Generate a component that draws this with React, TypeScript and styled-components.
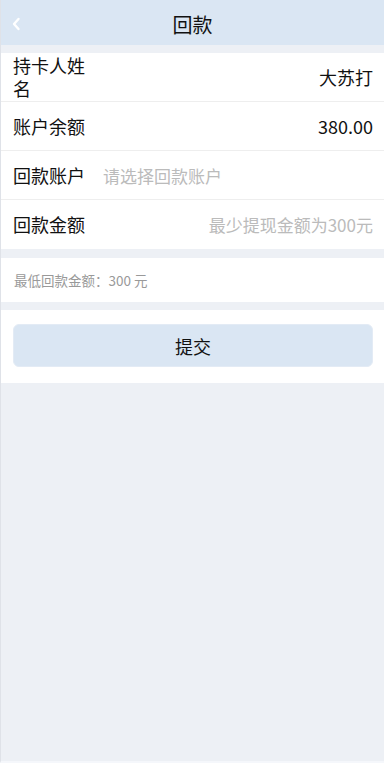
import { FC } from "react";
import styled, { createGlobalStyle } from "styled-components";

const GlobalStyle = createGlobalStyle`
  html, body {
    margin: 0;
    padding: 0;
    background: #edf0f5;
  }
  body {
    font-family: "Noto Sans CJK SC", "Liberation Sans", sans-serif;
    color: #111;
  }
`;

const Colors = {
  header: "#dae6f3",
  page: "#edf0f5",
  line: "#eeeeee",
  placeholder: "#bbbbbb",
  note: "#999999",
};

interface IField {
  label: string;
  value?: string;
  placeholder?: string;
  align?: "left" | "right";
}

const fields: IField[] = [
  { label: "持卡人姓名", value: "大苏打", align: "right" },
  { label: "账户余额", value: "380.00", align: "right" },
  { label: "回款账户", placeholder: "请选择回款账户", align: "left" },
  { label: "回款金额", placeholder: "最少提现金额为300元", align: "right" },
];

const ChevronLeft = () => (
  <svg width="10" height="14" viewBox="0 0 10 14">
    <path d="M7.5 2 L3 7 L7.5 12" fill="none" stroke="#fff" strokeWidth="2.4" strokeLinecap="round" strokeLinejoin="round" />
  </svg>
);

const App: FC = () => {
  return (
    <Page>
      <GlobalStyle />
      <Header>
        <BackButton>
          <ChevronLeft />
        </BackButton>
        <Title>回款</Title>
      </Header>

      <Section>
        {fields.map((f) => (
          <Row key={f.label}>
            <Label>{f.label}</Label>
            <Value $align={f.align} $muted={!f.value}>
              {f.value ?? f.placeholder}
            </Value>
          </Row>
        ))}
      </Section>

      <Note>最低回款金额：300 元</Note>

      <ButtonSection>
        <SubmitButton>提交</SubmitButton>
      </ButtonSection>
    </Page>
  );
};

const Page = styled.div`
  min-height: 761px;
  border-left: 1px solid #dfe2e8;
  border-bottom: 2px solid #f5f7fb;
  background: ${Colors.page};
  display: flex;
  flex-direction: column;
`;

const Header = styled.header`
  height: 45px;
  background: ${Colors.header};
  display: flex;
  align-items: center;
  justify-content: center;
  position: relative;
`;

const BackButton = styled.button`
  position: absolute;
  left: 10px;
  top: 17px;
  padding: 0;
  border: none;
  background: none;
  display: flex;
`;

const Title = styled.h1`
  margin: 0;
  font-size: 20px;
  font-weight: 400;
  line-height: 1;
  margin-top: 4px;
  color: #111;
`;

const Section = styled.div`
  margin-top: 8px;
  background: #fff;
`;

const Row = styled.div`
  height: 48px;
  display: flex;
  align-items: center;
  padding: 0 11px 0 12px;
  border-bottom: 1px solid ${Colors.line};
  &:last-child {
    border-bottom: none;
    height: 49px;
  }
`;

const Label = styled.div`
  width: 84px;
  flex-shrink: 0;
  font-size: 18px;
  line-height: 23px;
`;

const Value = styled.div<{ $align?: "left" | "right"; $muted?: boolean }>`
  flex: 1;
  padding-left: 6px;
  font-size: ${(p) => (p.$muted ? "17px" : "18px")};
  text-align: ${(p) => p.$align ?? "right"};
  color: ${(p) => (p.$muted ? Colors.placeholder : "#111")};
`;

const Note = styled.div`
  margin-top: 9px;
  height: 44px;
  background: #fff;
  display: flex;
  align-items: center;
  padding-left: 13px;
  font-size: 13.5px;
  color: ${Colors.note};
`;

const ButtonSection = styled.div`
  margin-top: 8px;
  background: #fff;
  padding: 14px 11px 16px 12px;
`;

const SubmitButton = styled.button`
  width: 100%;
  height: 43px;
  border: 1px solid #e3ebf5;
  border-radius: 6px;
  background: ${Colors.header};
  font-family: inherit;
  font-size: 18px;
  color: #111;
  cursor: pointer;
`;

export default App;
